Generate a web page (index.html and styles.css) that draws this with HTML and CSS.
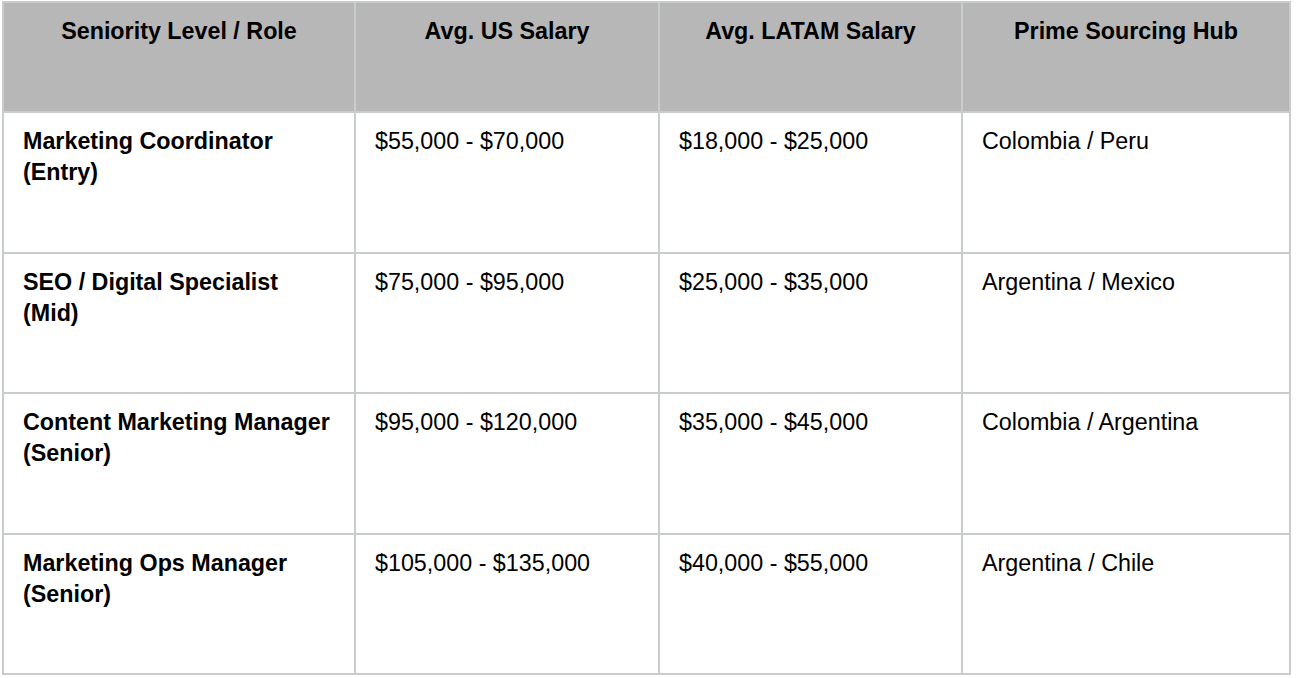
FILE: index.html
```html
<!DOCTYPE html>
<html>
<head>
<meta charset="utf-8">
<link rel="stylesheet" href="styles.css">
</head>
<body>
<table class="salary">
  <colgroup>
    <col class="c1"><col class="c2"><col class="c3"><col class="c4">
  </colgroup>
  <thead>
    <tr>
      <th>Seniority Level / Role</th>
      <th>Avg. US Salary</th>
      <th>Avg. LATAM Salary</th>
      <th>Prime Sourcing Hub</th>
    </tr>
  </thead>
  <tbody>
    <tr>
      <td class="role">Marketing Coordinator<br>(Entry)</td>
      <td>$55,000 - $70,000</td>
      <td>$18,000 - $25,000</td>
      <td>Colombia / Peru</td>
    </tr>
    <tr>
      <td class="role">SEO / Digital Specialist<br>(Mid)</td>
      <td>$75,000 - $95,000</td>
      <td>$25,000 - $35,000</td>
      <td>Argentina / Mexico</td>
    </tr>
    <tr>
      <td class="role">Content Marketing Manager<br>(Senior)</td>
      <td>$95,000 - $120,000</td>
      <td>$35,000 - $45,000</td>
      <td>Colombia / Argentina</td>
    </tr>
    <tr>
      <td class="role">Marketing Ops Manager<br>(Senior)</td>
      <td>$105,000 - $135,000</td>
      <td>$40,000 - $55,000</td>
      <td>Argentina / Chile</td>
    </tr>
  </tbody>
</table>
</body>
</html>
```

FILE: styles.css
```css
html, body {
  margin: 0;
  padding: 0;
  background: #ffffff;
}
body {
  padding: 1px 0 0 2px;
  font-family: "Liberation Sans", Arial, sans-serif;
  color: #000000;
}
.salary {
  border-collapse: collapse;
  width: 1289px;
  table-layout: fixed;
  font-size: 23.3px;
  line-height: 31px;
}
.c1 { width: 352px; }
.c2 { width: 304px; }
.c3 { width: 303px; }
.c4 { width: 328px; }
.salary th,
.salary td {
  border: 2px solid #c8cccb;
  vertical-align: top;
  padding: 13px 19px 13px 19px;
  text-align: left;
}
.salary th {
  background: #b7b7b7;
  font-weight: bold;
  text-align: center;
  height: 82px;
}
.salary td {
  height: 112.5px;
}
.salary td.role {
  font-weight: bold;
}
```
